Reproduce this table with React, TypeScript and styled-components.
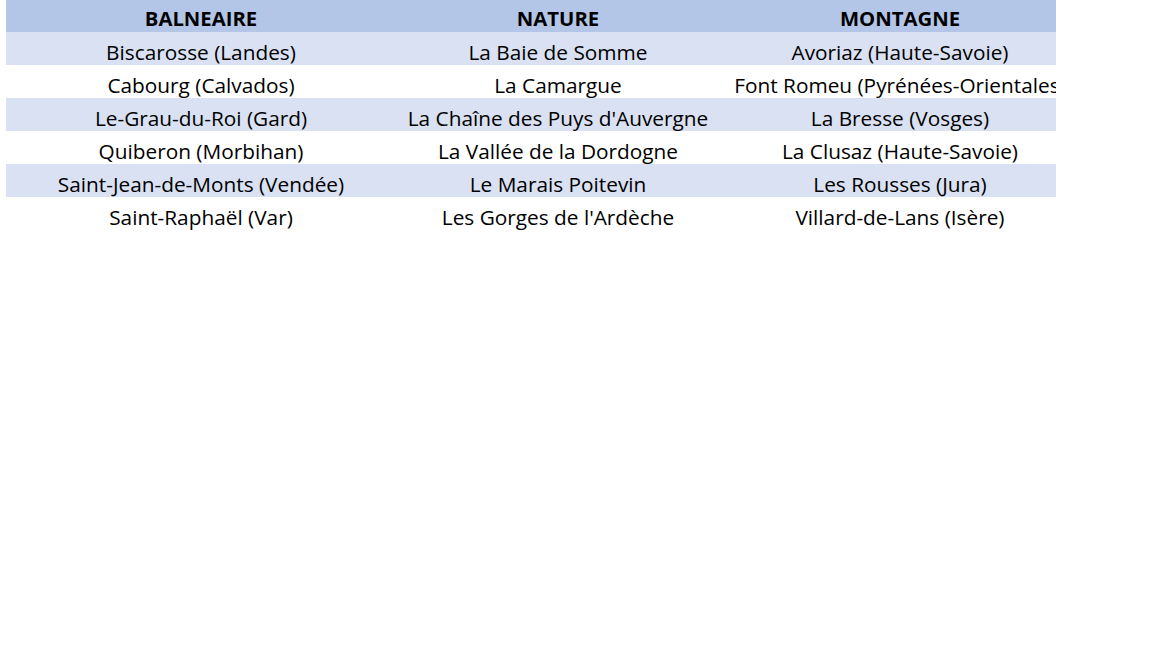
import styled, { createGlobalStyle } from 'styled-components';

const GlobalStyle = createGlobalStyle`
  html, body {
    margin: 0;
    padding: 0;
    background: #ffffff;
  }
  body {
    font-family: "Open Sans", "Liberation Sans", sans-serif;
    color: #000000;
  }
`;

const Sheet = styled.div`
  padding-left: 6px;
`;

// the sheet view ends at x=1056, the last column runs past it
const Clip = styled.div`
  width: 1050px;
  overflow: hidden;
`;

const Table = styled.div`
  display: grid;
  grid-template-columns: 390px 324px 360px;
  width: 1074px;
`;

const Row = styled.div<{ $bg: string }>`
  display: contents;

  & > div {
    background: ${(p) => p.$bg};
  }
`;

const Cell = styled.div<{ $head?: boolean }>`
  height: ${(p) => (p.$head ? '32px' : '33px')};
  box-sizing: border-box;
  padding-top: ${(p) => (p.$head ? '5px' : '7px')};
  text-align: center;
  white-space: nowrap;
  font-size: ${(p) => (p.$head ? '20.3px' : '20.8px')};
  line-height: 26px;
  font-weight: ${(p) => (p.$head ? 700 : 400)};
`;

const headers = ['BALNEAIRE', 'NATURE', 'MONTAGNE'];

const rows = [
  ['Biscarosse (Landes)', 'La Baie de Somme', 'Avoriaz (Haute-Savoie)'],
  ['Cabourg (Calvados)', 'La Camargue', 'Font Romeu (Pyrénées-Orientales)'],
  ['Le-Grau-du-Roi (Gard)', "La Chaîne des Puys d'Auvergne", 'La Bresse (Vosges)'],
  ['Quiberon (Morbihan)', 'La Vallée de la Dordogne', 'La Clusaz (Haute-Savoie)'],
  ['Saint-Jean-de-Monts (Vendée)', 'Le Marais Poitevin', 'Les Rousses (Jura)'],
  ['Saint-Raphaël (Var)', "Les Gorges de l'Ardèche", 'Villard-de-Lans (Isère)'],
];

const App = () => {
  return (
    <>
      <GlobalStyle />
      <Sheet>
        <Clip>
          <Table>
            <Row $bg="#b4c6e7">
              {headers.map((h) => (
                <Cell key={h} $head>
                  {h}
                </Cell>
              ))}
            </Row>
            {rows.map((r, i) => (
              <Row key={i} $bg={i % 2 === 0 ? '#d9e1f2' : '#ffffff'}>
                {r.map((c) => (
                  <Cell key={c}>{c}</Cell>
                ))}
              </Row>
            ))}
          </Table>
        </Clip>
      </Sheet>
    </>
  );
};

export default App;
